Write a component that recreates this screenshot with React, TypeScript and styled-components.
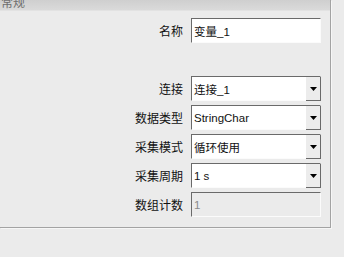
import React from 'react';
import styled, { createGlobalStyle } from 'styled-components';

const GlobalStyle = createGlobalStyle`
  html, body {
    margin: 0;
    padding: 0;
    background: #ebebeb;
  }
  body {
    font-family: "Liberation Sans", "Noto Sans CJK SC", sans-serif;
  }
`;

const Page = styled.div`
  width: 344px;
  height: 257px;
  overflow: hidden;
  background: #ebebeb;
`;

const Panel = styled.div`
  width: 330px;
  height: 227px;
  background: #ebebeb;
  border-right: 1px solid #a3a3a3;
  border-bottom: 1px solid #a3a3a3;
  box-shadow: 1px 1px 0 #f6f6f6;
`;

const Header = styled.div`
  height: 10px;
  overflow: hidden;
  background: linear-gradient(#cfcfcf, #dadada);
  border-bottom: 1px solid #e2e2e2;
  color: #6f6f6f;
  font-family: "Noto Sans CJK SC", sans-serif;
  font-size: 12px;
  line-height: 12px;
  padding-left: 1px;
`;

const HeaderText = styled.div`
  margin-top: -4px;
`;

const Form = styled.div`
  display: grid;
  grid-template-columns: 183px 130px;
  column-gap: 8px;
  row-gap: 4px;
  padding-top: 7px;
`;

const Label = styled.div<{ $gapTop?: number }>`
  display: flex;
  align-items: center;
  justify-content: flex-end;
  font-family: "Noto Sans CJK SC", sans-serif;
  font-size: 12px;
  color: #111;
  margin-top: ${(p) => p.$gapTop ?? 0}px;
`;

const Field = styled.div<{ $disabled?: boolean; $gapTop?: number }>`
  box-sizing: border-box;
  height: 25px;
  display: flex;
  align-items: stretch;
  background: ${(p) => (p.$disabled ? '#ebebeb' : '#ffffff')};
  border-top: 1px solid #6a6a6a;
  border-left: 1px solid #6a6a6a;
  border-bottom: 1px solid #fbfbfb;
  border-right: 1px solid #fbfbfb;
  margin-top: ${(p) => p.$gapTop ?? 0}px;
`;

const Value = styled.div<{ $muted?: boolean }>`
  flex: 1;
  display: flex;
  align-items: center;
  padding-left: 2px;
  font-size: 11.5px;
  color: ${(p) => (p.$muted ? '#8a8a8a' : '#111')};
  white-space: nowrap;
`;

const DropButton = styled.div`
  box-sizing: border-box;
  width: 15px;
  display: flex;
  align-items: center;
  justify-content: center;
  background: #ececec;
  border-right: 1px solid #6a6a6a;
  border-bottom: 1px solid #6a6a6a;
  margin-bottom: -1px;
  margin-right: -1px;
`;

const Arrow = () => (
  <svg width="7" height="4" viewBox="0 0 7 4">
    <path d="M0 0h7L3.5 4z" fill="#000" />
  </svg>
);

type Row = { label: string; value: string; kind: 'input' | 'combo' | 'disabled'; gap?: number };

const rows: Row[] = [
  { label: '名称', value: '变量_1', kind: 'input' },
  { label: '连接', value: '连接_1', kind: 'combo', gap: 29 },
  { label: '数据类型', value: 'StringChar', kind: 'combo' },
  { label: '采集模式', value: '循环使用', kind: 'combo' },
  { label: '采集周期', value: '1 s', kind: 'combo' },
  { label: '数组计数', value: '1', kind: 'disabled' },
];

export default function App() {
  return (
    <Page>
      <GlobalStyle />
      <Panel>
        <Header>
          <HeaderText>常规</HeaderText>
        </Header>
        <Form>
          {rows.map((r) => (
            <React.Fragment key={r.label}>
              <Label $gapTop={r.gap}>{r.label}</Label>
              <Field $disabled={r.kind === 'disabled'} $gapTop={r.gap}>
                <Value $muted={r.kind === 'disabled'}>{r.value}</Value>
                {r.kind === 'combo' && (
                  <DropButton>
                    <Arrow />
                  </DropButton>
                )}
              </Field>
            </React.Fragment>
          ))}
        </Form>
      </Panel>
    </Page>
  );
}
